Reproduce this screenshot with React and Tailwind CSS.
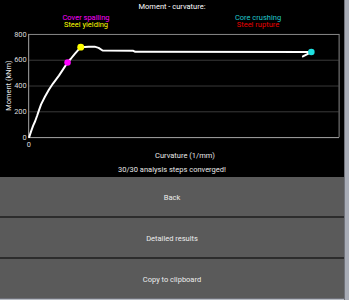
import React from "react";

function Chart() {
  const curve = [
    [28, 110], [30, 104], [32, 98.5], [34, 94], [36, 88.5], [38, 82.5], [40, 77],
    [44, 69], [48, 62], [52, 56], [58, 48], [62, 42], [66.7, 34.7], [70, 31], [74, 26],
    [80, 19.3], [88, 19], [94, 18.8], [98, 20], [102, 22.7], [133, 23], [135, 24], [312, 24.3],
  ];
  const d = curve.map((p, i) => (i ? "L" : "M") + p[0] + " " + p[1]).join(" ");
  const ticks = [
    ["800", 6], ["600", 32], ["400", 58], ["200", 84], ["0", 110],
  ];
  return (
    <svg width="344" height="122" viewBox="0 0 344 122" className="block">
      {[32, 58, 84].map((y) => (
        <line key={y} x1="28" x2="340" y1={y + 0.5} y2={y + 0.5} stroke="#3a3a3a" strokeWidth="1" />
      ))}
      <line x1="27.5" x2="340.5" y1="6.5" y2="6.5" stroke="#8a8a8a" strokeWidth="1" />
      <line x1="340.5" x2="340.5" y1="6" y2="110" stroke="#8a8a8a" strokeWidth="1" />
      <line x1="27.5" x2="340.5" y1="110.5" y2="110.5" stroke="#a8a8a8" strokeWidth="1" />
      <line x1="27.5" x2="27.5" y1="6" y2="111" stroke="#a8a8a8" strokeWidth="1" />
      {ticks.map(([t, y]) => (
        <text key={t} x="25.5" y={y + 2.6} fill="#dcdcdc" fontSize="7.5" textAnchor="end" fontFamily="Roboto, sans-serif">{t}</text>
      ))}
      <text x="27.7" y="119.8" fill="#dcdcdc" fontSize="7.5" textAnchor="middle" fontFamily="Roboto, sans-serif">0</text>
      <text x="0" y="0" fill="#e8e8e8" fontSize="7.5" textAnchor="middle" fontFamily="Roboto, sans-serif" transform="translate(9.5 58) rotate(-90)">Moment (kNm)</text>
      <path d={d} fill="none" stroke="#ffffff" strokeWidth="2" strokeLinejoin="round" strokeLinecap="round" />
      <path d="M304 28.7 L311 25" fill="none" stroke="#ffffff" strokeWidth="2" strokeLinecap="round" />
      <circle cx="66.7" cy="34.7" r="3.3" fill="#ff00ff" />
      <circle cx="80" cy="19.3" r="3.5" fill="#ffff00" />
      <circle cx="312.5" cy="24.3" r="3.3" fill="#1ee0e0" />
    </svg>
  );
}

function Btn({ label }) {
  return (
    <button className="h-[39px] w-full bg-[#5a5a5a] text-[#ececec] text-[7.5px] pt-[2px] flex items-center justify-center">
      {label}
    </button>
  );
}

export default function App() {
  return (
    <div className="w-[349px] h-[300px] flex overflow-hidden bg-black" style={{ fontFamily: "Roboto, 'Liberation Sans', sans-serif" }}>
      <div className="w-[344px] flex flex-col">
        <div className="h-[177px] bg-black flex flex-col">
          <div className="h-[14px] leading-[14px] text-center text-white text-[7.5px]">Moment - curvature:</div>
          <div className="grid grid-cols-2 text-[7.5px] leading-[7px] text-center">
            <div>
              <div className="text-[#ff00ff]">Cover spalling</div>
              <div className="text-[#ffff00]">Steel yielding</div>
            </div>
            <div>
              <div className="text-[#22c8cc]">Core crushing</div>
              <div className="text-[#e80000]">Steel rupture</div>
            </div>
          </div>
          <Chart />
          <div className="h-[14px] leading-[14px] text-center text-[#e8e8e8] text-[7.5px] pl-[26px]">Curvature (1/mm)</div>
          <div className="h-[14px] leading-[14px] text-center text-[#e8e8e8] text-[7.5px]">30/30 analysis steps converged!</div>
        </div>
        <Btn label="Back" />
        <div className="h-[2px] bg-[#2c2c2c]" />
        <Btn label="Detailed results" />
        <div className="h-[2px] bg-[#2c2c2c]" />
        <Btn label="Copy to clipboard" />
        <div className="h-[1px] bg-[#6e7078]" />
        <div className="flex-1 bg-[#b8bcc4]" />
      </div>
      <div className="w-[5px] flex">
        <div className="w-[1px] bg-[#70727a]" />
        <div className="flex-1 bg-[#a8acb6]" />
      </div>
    </div>
  );
}
